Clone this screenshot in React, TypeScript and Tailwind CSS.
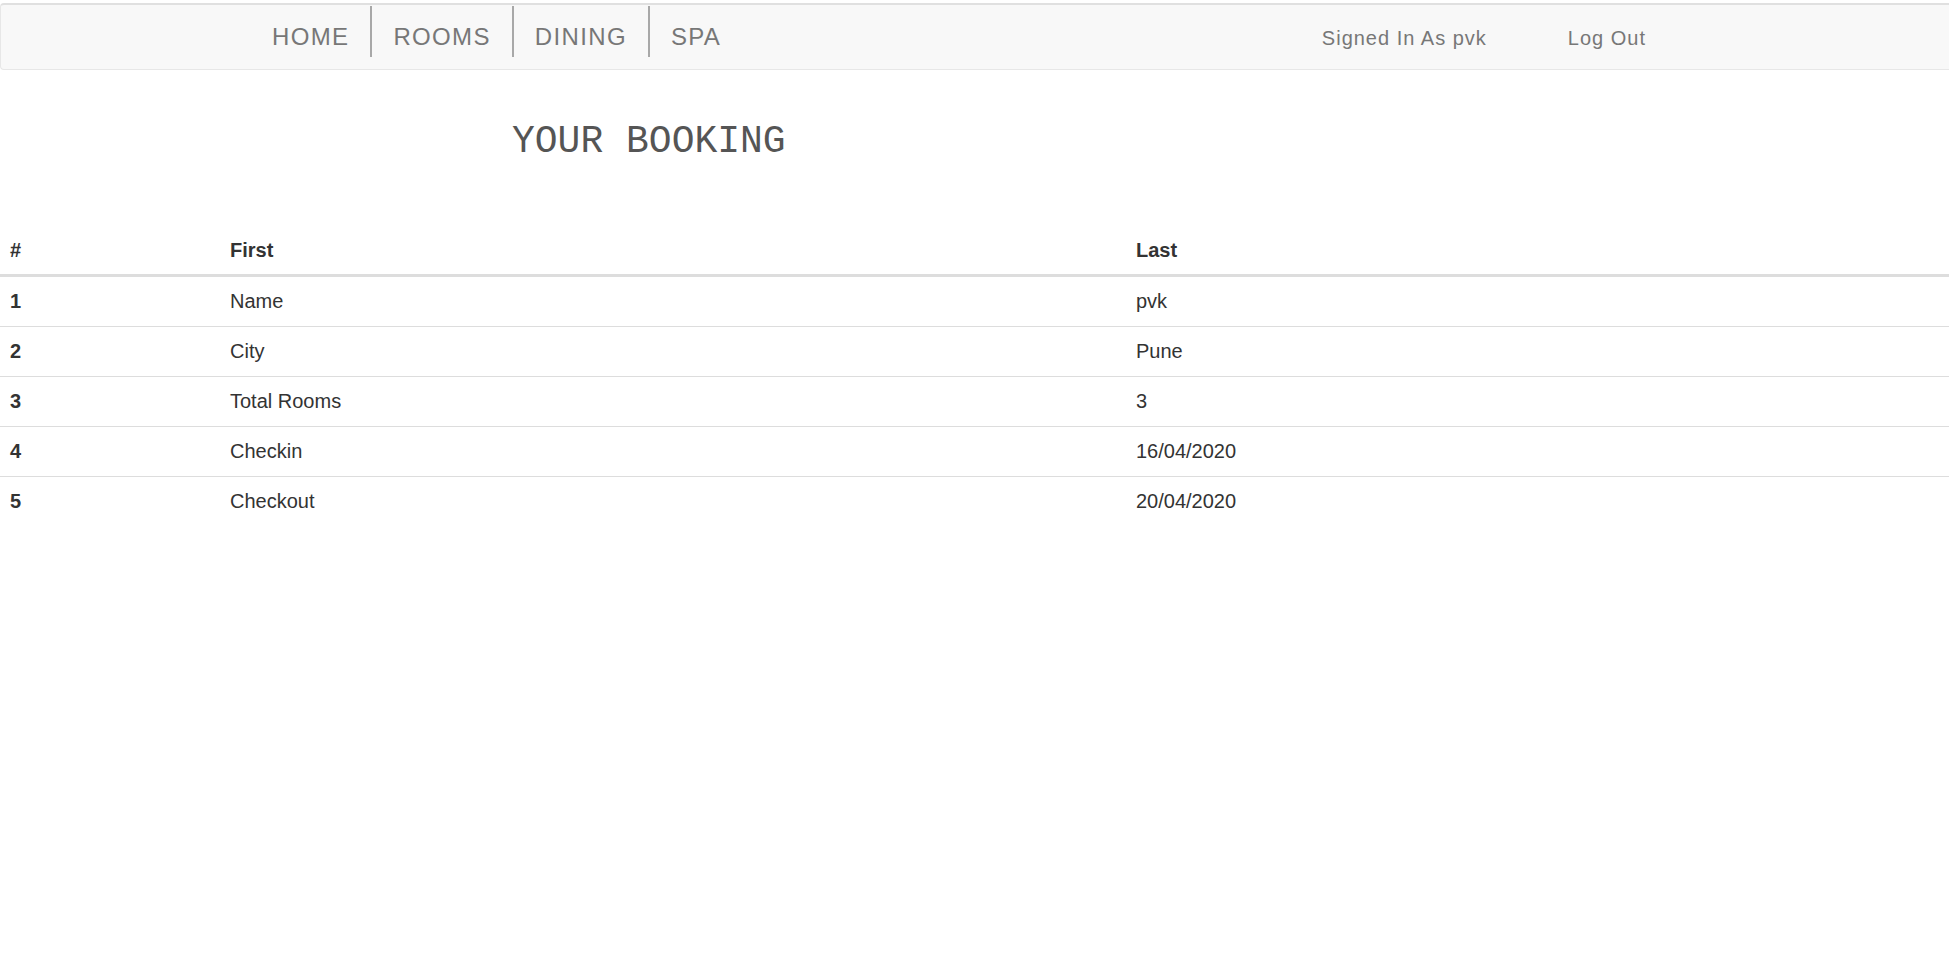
import React from "react";

const rows: [string, string, string][] = [
  ["1", "Name", "pvk"],
  ["2", "City", "Pune"],
  ["3", "Total Rooms", "3"],
  ["4", "Checkin", "16/04/2020"],
  ["5", "Checkout", "20/04/2020"],
];

const navItems = ["HOME", "ROOMS", "DINING", "SPA"];

export default function App() {
  return (
    <div
      className="min-h-screen w-full bg-white overflow-hidden"
      style={{ fontFamily: '"Liberation Sans", Arial, sans-serif' }}
    >
      <div className="pt-[3px]">
        <nav className="flex h-[67px] items-start border-t-2 border-t-[#e0e0e0] border-l border-b border-[#e7e7e7] rounded-tl-[4px] rounded-bl-[4px] bg-[#f8f8f8]">
          <ul className="ml-[250px] mt-px flex">
            {navItems.map((item, i) => (
              <li
                key={item}
                className={
                  "h-[51px] px-[21px] pt-[17px] text-[24px] leading-[28px] tracking-[1.35px] text-[#777] " +
                  (i < navItems.length - 1 ? "border-r-2 border-[#a8a8a8]" : "")
                }
              >
                {item}
              </li>
            ))}
          </ul>
          <div className="ml-auto mr-[303px] flex gap-[81px] pt-[19px] text-[20px] leading-[28px] tracking-[1px] text-[#777]">
            <span>Signed In As pvk</span>
            <span>Log Out</span>
          </div>
        </nav>
      </div>

      <h1
        className="ml-[512px] mt-[50px] h-[44px] text-[38px] leading-[44px] font-normal text-[#555]"
        style={{ fontFamily: '"Liberation Mono", "Courier New", monospace' }}
      >
        YOUR BOOKING
      </h1>

      <table className="mt-[62px] w-full border-collapse text-[20px] leading-[28px] text-[#333]">
        <thead>
          <tr>
            <th className="w-[220px] border-b-[3px] border-[#dddddd] pl-[10px] pt-[10px] pb-[10px] text-left font-bold">
              #
            </th>
            <th className="w-[906px] border-b-[3px] border-[#dddddd] pl-[10px] pt-[10px] pb-[10px] text-left font-bold">
              First
            </th>
            <th className="border-b-[3px] border-[#dddddd] pl-[10px] pt-[10px] pb-[10px] text-left font-bold">
              Last
            </th>
          </tr>
        </thead>
        <tbody>
          {rows.map(([n, a, b]) => (
            <tr key={n}>
              <td className="border-t border-[#dddddd] pl-[10px] pt-[10px] pb-[11px] font-bold">{n}</td>
              <td className="border-t border-[#dddddd] pl-[10px] pt-[10px] pb-[11px]">{a}</td>
              <td className="border-t border-[#dddddd] pl-[10px] pt-[10px] pb-[11px]">{b}</td>
            </tr>
          ))}
        </tbody>
      </table>
    </div>
  );
}
